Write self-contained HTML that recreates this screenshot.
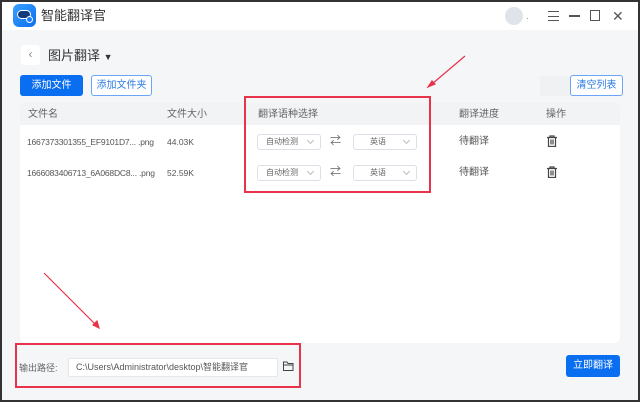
<!DOCTYPE html>
<html><head><meta charset="utf-8"><style>
*{margin:0;padding:0;box-sizing:border-box}
body{width:640px;height:402px;overflow:hidden;font-family:"Liberation Sans","Noto Sans CJK SC",sans-serif;background:#333;position:relative}
.win{position:absolute;left:2px;top:2px;width:636px;height:398px;background:#f5f6f8;overflow:hidden}
.tb{position:absolute;left:0;top:0;width:636px;height:28px;background:#fff}
.a{position:absolute}
.t{font-size:10px;color:#555;white-space:nowrap;line-height:1}
.sel{position:absolute;width:64px;height:16px;border:1px solid #dcdfe6;border-radius:3px;background:#fff;font-size:8px;color:#666;padding-left:8px;line-height:14px}
.sel:after{content:"";position:absolute;right:7px;top:3px;width:4px;height:4px;border-right:1px solid #bbb;border-bottom:1px solid #bbb;transform:rotate(45deg)}
.red{position:absolute;border:2px solid #e8334a}
</style></head><body><div class="win">
<div class="tb">
 <div class="a" style="left:11px;top:2px;width:23px;height:23px;border-radius:6px;background:linear-gradient(135deg,#3aa0ff,#0a6ef0)"></div>
 <div class="a" style="left:15px;top:8px;width:14px;height:9px;border-radius:5px;background:#123a7a;border:1.5px solid #fff"></div>
 <div class="a" style="left:24px;top:14px;width:7px;height:7px;border-radius:50%;background:#1a7cff;border:1px solid #fff"></div>
 <div class="a t" style="left:39px;top:7px;font-size:13px;color:#333">智能翻译官</div>
 <div class="a" style="left:503px;top:5px;width:18px;height:18px;border-radius:50%;background:#dfe4ea"></div>
 <div class="a t" style="left:524px;top:10px;color:#999">.</div>
 <div class="a" style="left:546px;top:9px;width:11px;height:10px;border-top:1.5px solid #555;border-bottom:1.5px solid #555"></div>
 <div class="a" style="left:546px;top:13.5px;width:11px;height:1.5px;background:#555"></div>
 <div class="a" style="left:567px;top:13px;width:11px;height:1.5px;background:#555"></div>
 <div class="a" style="left:588px;top:8px;width:10px;height:11px;border:1.5px solid #555"></div>
 <div class="a t" style="left:610px;top:7px;font-size:14px;color:#555">✕</div>
</div>
<div class="a" style="left:19px;top:43px;width:19px;height:20px;background:#fff;border-radius:3px;color:#888;font-size:12px;text-align:center;line-height:19px">‹</div>
<div class="a t" style="left:46px;top:47px;font-size:13px;color:#333">图片翻译 <span style="font-size:9px">▼</span></div>
<div class="a t" style="left:18px;top:73px;width:63px;height:21px;background:#0a6ef0;border-radius:3px;color:#fff;text-align:center;line-height:21px">添加文件</div>
<div class="a t" style="left:89px;top:73px;width:61px;height:21px;border:1px solid #6aa6f5;border-radius:3px;color:#2d7be6;text-align:center;line-height:19px;background:#fff">添加文件夹</div>
<div class="a" style="left:538px;top:74px;width:30px;height:20px;background:#f0f1f3"></div>
<div class="a t" style="left:568px;top:73px;width:53px;height:21px;border:1px solid #6aa6f5;border-radius:3px;color:#2d7be6;text-align:center;line-height:19px;background:#fff">清空列表</div>
<div class="a" style="left:18px;top:101px;width:600px;height:240px;background:#fff;border-radius:6px;overflow:hidden">
 <div style="height:22px;background:#f2f3f5"></div>
</div>
<div class="a t" style="left:26px;top:108px;color:#666">文件名</div>
<div class="a t" style="left:165px;top:108px;color:#666">文件大小</div>
<div class="a t" style="left:256px;top:108px;color:#666">翻译语种选择</div>
<div class="a t" style="left:457px;top:108px;color:#666">翻译进度</div>
<div class="a t" style="left:544px;top:108px;color:#666">操作</div>
<div class="a t" style="left:25px;top:136px;font-size:8.5px;letter-spacing:-0.2px">1667373301355_EF9101D7... .png</div>
<div class="a t" style="left:165px;top:136px;font-size:8.5px">44.03K</div>
<div class="a t" style="left:25px;top:167px;font-size:8.5px;letter-spacing:-0.2px">1666083406713_6A068DC8... .png</div>
<div class="a t" style="left:165px;top:167px;font-size:8.5px">52.59K</div>
<div class="sel" style="left:255px;top:132px">自动检测</div>
<div class="sel" style="left:351px;top:132px;padding-left:16px">英语</div>
<div class="sel" style="left:255px;top:163px">自动检测</div>
<div class="sel" style="left:351px;top:163px;padding-left:16px">英语</div>
<div class="a t" style="left:328px;top:134px;font-size:11px;color:#666">⇄</div>
<div class="a t" style="left:328px;top:165px;font-size:11px;color:#666">⇄</div>
<div class="a t" style="left:457px;top:135px">待翻译</div>
<div class="a t" style="left:457px;top:166px">待翻译</div>
<svg class="a" style="left:544px;top:133px" width="12" height="12" viewBox="0 0 12 12"><path d="M1 2.5h10M4 2.5V1h4v1.5M2.5 2.5v9h7v-9M5 4.5v5M7 4.5v5" stroke="#444" stroke-width="1.2" fill="none"/></svg>
<svg class="a" style="left:544px;top:164px" width="12" height="12" viewBox="0 0 12 12"><path d="M1 2.5h10M4 2.5V1h4v1.5M2.5 2.5v9h7v-9M5 4.5v5M7 4.5v5" stroke="#444" stroke-width="1.2" fill="none"/></svg>
<div class="red" style="left:242px;top:94px;width:187px;height:97px"></div>
<svg class="a" style="left:0;top:0" width="636" height="398"><g stroke="#e8334a" stroke-width="1.2" fill="#e8334a"><line x1="463" y1="54" x2="430" y2="82"/><path d="M426 85l7-3-3-3z"/><line x1="42" y1="271" x2="94" y2="323"/><path d="M97 326l-2-7-4 4z"/></g></svg>
<div class="a t" style="left:17px;top:362px;font-size:9px;color:#666">输出路径:</div>
<div class="a t" style="left:66px;top:356px;width:210px;height:19px;background:#fff;border:1px solid #e4e6ea;border-radius:2px;font-size:9px;color:#555;padding-left:7px;line-height:17px">C:\Users\Administrator\desktop\智能翻译官</div>
<svg class="a" style="left:281px;top:359px" width="11" height="10" viewBox="0 0 11 10"><path d="M0.5 1h3.5l1 1.5h5v7H0.5z M0.5 4h10" stroke="#444" fill="none"/></svg>
<div class="red" style="left:13px;top:341px;width:286px;height:45px"></div>
<div class="a t" style="left:564px;top:353px;width:54px;height:22px;background:#0a6ef0;border-radius:3px;color:#fff;text-align:center;line-height:22px">立即翻译</div>
</div></body></html>
